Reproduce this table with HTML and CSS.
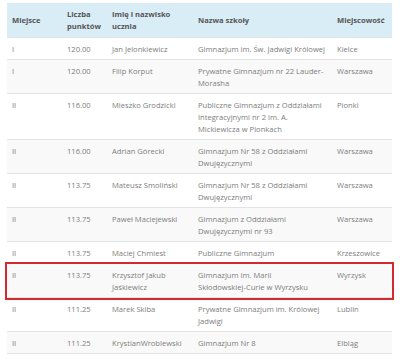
FILE: index.html
```html
<!DOCTYPE html>
<html lang="pl">

<head>
    <meta charset="UTF-8">
    <meta name="viewport" content="width=device-width, initial-scale=1.0">
    <title>Wyniki konkursu</title>
    <link rel="stylesheet" href="styles.css">
</head>

<body>
    <table class="results">
        <colgroup>
            <col class="c-place">
            <col class="c-points">
            <col class="c-name">
            <col class="c-school">
            <col class="c-city">
        </colgroup>
        <thead>
            <tr>
                <th>Miejsce</th>
                <th>Liczba punktów</th>
                <th>Imię i nazwisko ucznia</th>
                <th>Nazwa szkoły</th>
                <th>Miejscowość</th>
            </tr>
        </thead>
        <tbody>
            <tr>
                <td>I</td>
                <td>120.00</td>
                <td>Jan Jelonkiewicz</td>
                <td>Gimnazjum im. Św. Jadwigi Królowej</td>
                <td>Kielce</td>
            </tr>
            <tr>
                <td>I</td>
                <td>120.00</td>
                <td>Filip Korput</td>
                <td>Prywatne Gimnazjum nr 22 Lauder-Morasha</td>
                <td>Warszawa</td>
            </tr>
            <tr>
                <td>II</td>
                <td>116.00</td>
                <td>Mieszko Grodzicki</td>
                <td>Publiczne Gimnazjum z Oddziałami Integracyjnymi nr 2 im. A. Mickiewicza w Pionkach</td>
                <td>Pionki</td>
            </tr>
            <tr>
                <td>II</td>
                <td>116.00</td>
                <td>Adrian Górecki</td>
                <td>Gimnazjum Nr 58 z Oddziałami Dwujęzycznymi</td>
                <td>Warszawa</td>
            </tr>
            <tr>
                <td>II</td>
                <td>113.75</td>
                <td>Mateusz Smoliński</td>
                <td>Gimnazjum Nr 58 z Oddziałami Dwujęzycznymi</td>
                <td>Warszawa</td>
            </tr>
            <tr>
                <td>II</td>
                <td>113.75</td>
                <td>Paweł Maciejewski</td>
                <td>Gimnazjum z Oddziałami Dwujęzycznymi nr 93</td>
                <td>Warszawa</td>
            </tr>
            <tr>
                <td>II</td>
                <td>113.75</td>
                <td>Maciej Chmiest</td>
                <td>Publiczne Gimnazjum</td>
                <td>Krzeszowice</td>
            </tr>
            <tr class="marked">
                <td>II</td>
                <td>113.75</td>
                <td>Krzysztof Jakub Jaśkiewicz</td>
                <td>Gimnazjum im. Marii <span class="nowrap">Skłodowskiej-Curie</span> w Wyrzysku</td>
                <td>Wyrzysk</td>
            </tr>
            <tr>
                <td>II</td>
                <td>111.25</td>
                <td>Marek Skiba</td>
                <td>Prywatne Gimnazjum im. Królowej Jadwigi</td>
                <td>Lublin</td>
            </tr>
            <tr>
                <td>II</td>
                <td>111.25</td>
                <td>KrystianWroblewski</td>
                <td>Gimnazjum Nr 8</td>
                <td>Elbląg</td>
            </tr>
        </tbody>
    </table>
</body>

</html>
```

FILE: styles.css
```css
body {
    margin: 0;
    padding: 3px 8px 0 7px;
    background: #fff;
    font-family: "Open Sans", "DejaVu Sans", sans-serif;
    font-size: 7.6px;
    color: #7d7d7d;
}

.results {
    width: 385px;
    border-collapse: collapse;
    table-layout: fixed;
}

.c-place { width: 55px; }
.c-points { width: 45px; }
.c-name { width: 86px; }
.c-school { width: 139px; }
.c-city { width: 60px; }

.results th {
    background: #d9edf7;
    color: #555;
    font-weight: 700;
    text-align: left;
    vertical-align: middle;
    padding: 5px 5px;
    line-height: 12px;
    height: 24px;
}

.results td {
    text-align: left;
    vertical-align: top;
    padding: 5px 5px 4px;
    line-height: 12px;
    border-top: 1px solid #e3e3e3;
}

.nowrap {
    white-space: nowrap;
}

.results tbody tr:nth-child(even) td {
    background: #f9f9f9;
}

.results tbody tr:last-child td {
    border-bottom: 1px solid #e3e3e3;
}

.results tr.marked {
    outline: 2px solid #d42a2f;
    outline-offset: 0;
}
```
